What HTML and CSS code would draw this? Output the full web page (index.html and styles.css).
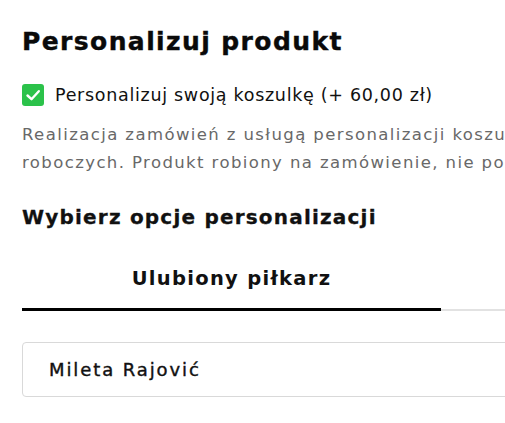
FILE: index.html
```html
<!DOCTYPE html>
<html lang="pl">
<head>
<meta charset="utf-8">
<link rel="stylesheet" href="styles.css">
</head>
<body>
<div class="page">
  <h2 class="title">Personalizuj produkt</h2>
  <label class="check">
    <span class="box"><svg viewBox="0 0 22 22" width="22" height="22"><path d="M5.5 11.5 L9.5 15.2 L16.8 7.2" fill="none" stroke="#fff" stroke-width="2.4" stroke-linecap="round" stroke-linejoin="round"/></svg></span>
    <span class="check-text">Personalizuj swoją koszulkę (+ 60,00 zł)</span>
  </label>
  <p class="desc">Realizacja zamówień z usługą personalizacji koszulki wynosi do 14 dni<br>roboczych. Produkt robiony na zamówienie, nie podlega zwrotowi.</p>
  <h3 class="subtitle">Wybierz opcje personalizacji</h3>
  <div class="tabs">
    <div class="tab active">Ulubiony piłkarz</div>
    <div class="tab">Własny nadruk</div>
  </div>
  <div class="select">Mileta Rajović</div>
</div>
</body>
</html>
```
FILE: styles.css
```css
html, body { margin: 0; padding: 0; background: #fff; overflow: hidden; }
body { width: 505px; height: 423px; font-family: "DejaVu Sans", sans-serif; color: #111; }
.page { width: 1000px; padding: 27px 0 0 22px; }
.title { margin: 0; font-size: 25px; font-weight: 800; letter-spacing: 1.4px; line-height: 30px; color: #0a0a0a; -webkit-text-stroke: 0.4px #0a0a0a; }
.check { display: flex; align-items: center; gap: 11px; margin-top: 27px; }
.box { width: 22px; height: 22px; background: #2bc24a; border-radius: 3px; display: flex; }
.check-text { font-size: 17.5px; letter-spacing: 0.7px; line-height: 22px; }
.desc { margin: 15px 0 0; white-space: nowrap; font-size: 16.5px; line-height: 28px; color: #686868; letter-spacing: 1.4px; }
.subtitle { margin: 28px 0 0; font-size: 20px; font-weight: 800; letter-spacing: 1.2px; line-height: 24px; -webkit-text-stroke: 0.3px #111; }
.tabs { display: flex; margin-top: 38px; width: 483px; }
.tab { flex: 0 0 419px; text-align: center; font-size: 19.5px; font-weight: 700; letter-spacing: 1.3px; line-height: 24px; padding: 0 0 18px; border-bottom: 2px solid #e2e2e2; white-space: nowrap; overflow: hidden; }
.tab.active { border-bottom: 3px solid #000; padding-bottom: 17px; }
.select { margin-top: 31px; width: 600px; height: 55px; box-sizing: border-box; border: 1px solid #d9d9d9; border-radius: 4px; padding-left: 26px; display: flex; align-items: center; font-size: 18px; letter-spacing: 1.9px; -webkit-text-stroke: 0.4px #111; }
```
